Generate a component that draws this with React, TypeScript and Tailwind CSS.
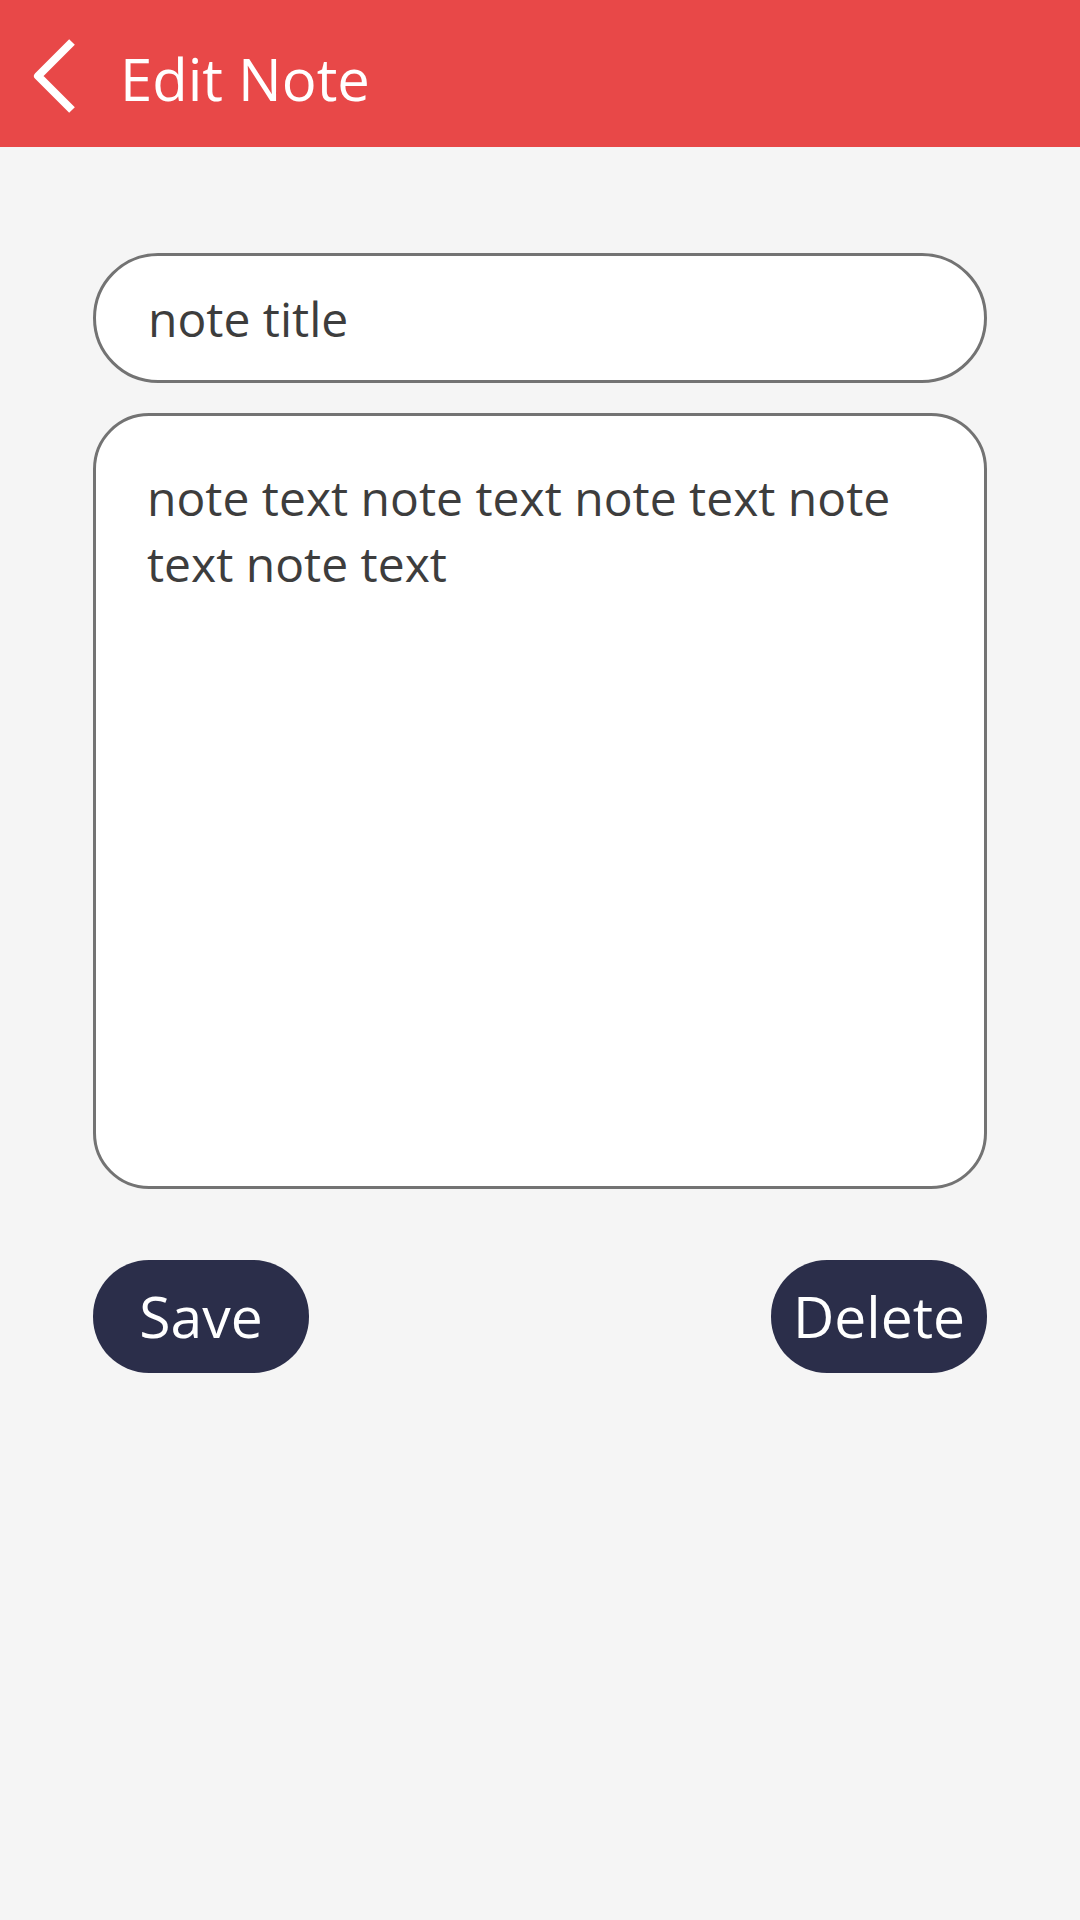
import React, { useState } from 'react';

// ============================================================
// Edit Note — title + body editor with save / delete actions
// ============================================================

const FONT = { fontFamily: '"Open Sans", "Noto Sans", sans-serif' };

function BackChevron() {
  return (
    <svg width="56" height="90" viewBox="0 0 56 90" fill="none">
      <path d="M44 8 L10 42 L44 76" stroke="#ffffff" strokeWidth="8" strokeLinejoin="round" />
    </svg>
  );
}

export default function App() {
  const [title, setTitle] = useState('note title');
  const [body, setBody] = useState(
    'note text note text note text note text note text',
  );

  return (
    <div className="min-h-[1920px] w-[1080px] bg-[#f5f5f5]" style={FONT}>
      {/* Header */}
      <div className="flex h-[147px] items-center bg-[#e84848] pt-[10px] pl-[28px]">
        <button className="flex items-center">
          <BackChevron />
        </button>
        <h1 className="ml-[36px] text-[58px] leading-none font-normal text-white">
          Edit Note
        </h1>
      </div>

      {/* Form */}
      <div className="flex flex-col px-[93px] pt-[106px]">
        <input
          value={title}
          onChange={(e) => setTitle(e.target.value)}
          className="h-[130px] w-full rounded-full border-[3px] border-[#737373] bg-white px-[52px] text-[48px] text-[#3d3d3d] outline-none"
          style={FONT}
        />
        <textarea
          value={body}
          onChange={(e) => setBody(e.target.value)}
          className="mt-[30px] h-[776px] w-full resize-none rounded-[56px] border-[3px] border-[#737373] bg-white px-[51px] pt-[49px] text-[48px] leading-[66px] text-[#3d3d3d] outline-none"
          style={FONT}
        />

        {/* Actions */}
        <div className="mt-[71px] flex items-center justify-between">
          <button className="flex h-[113px] w-[216px] items-center justify-center rounded-[56px] bg-[#2b2e4a] text-[57px] leading-none text-white">
            Save
          </button>
          <button className="flex h-[113px] w-[216px] items-center justify-center rounded-[56px] bg-[#2b2e4a] text-[57px] leading-none text-white">
            Delete
          </button>
        </div>
      </div>
    </div>
  );
}
